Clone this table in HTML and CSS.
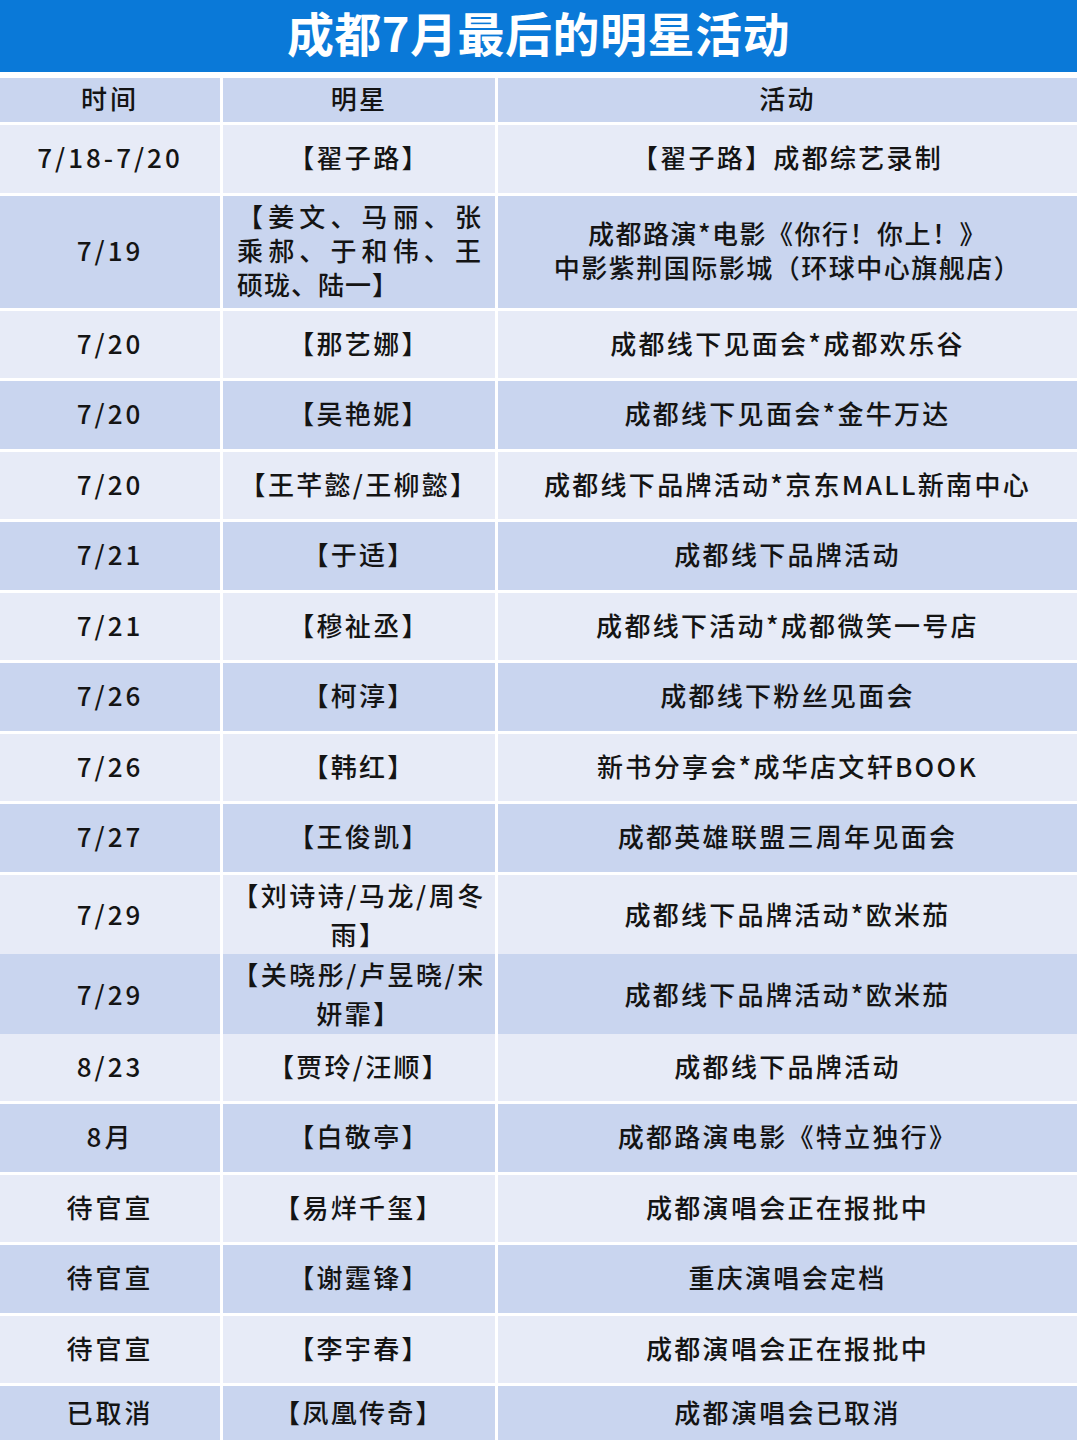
FILE: index.html
```html
<!DOCTYPE html>
<html lang="zh-CN">
<head>
<meta charset="utf-8">
<title>成都7月最后的明星活动</title>
<link rel="stylesheet" href="styles.css">
</head>
<body>
<div class="page">
  <div class="title">成都7月最后的明星活动</div>
  <div class="table">
    <div class="row head dark"><div class="cell">时间</div><div class="cell">明星</div><div class="cell">活动</div></div>
    <div class="row light"><div class="cell">7/18-7/20</div><div class="cell">【翟子路】</div><div class="cell">【翟子路】成都综艺录制</div></div>
    <div class="row dark tall">
      <div class="cell">7/19</div>
      <div class="cell"><div class="just"><span class="jl">【姜文、马丽、张</span><span class="jl">乘郝、于和伟、王</span><span class="jl last">硕珑、陆一】</span></div></div>
      <div class="cell"><div class="two"><span class="ln">成都路演*电影《你行！你上！》</span><span class="ln">中影紫荆国际影城（环球中心旗舰店）</span></div></div>
    </div>
    <div class="row light"><div class="cell">7/20</div><div class="cell">【那艺娜】</div><div class="cell">成都线下见面会*成都欢乐谷</div></div>
    <div class="row dark"><div class="cell">7/20</div><div class="cell">【吴艳妮】</div><div class="cell">成都线下见面会*金牛万达</div></div>
    <div class="row light"><div class="cell">7/20</div><div class="cell">【王芊懿/王柳懿】</div><div class="cell">成都线下品牌活动*京东MALL新南中心</div></div>
    <div class="row dark"><div class="cell">7/21</div><div class="cell">【于适】</div><div class="cell">成都线下品牌活动</div></div>
    <div class="row light"><div class="cell">7/21</div><div class="cell">【穆祉丞】</div><div class="cell">成都线下活动*成都微笑一号店</div></div>
    <div class="row dark"><div class="cell">7/26</div><div class="cell">【柯淳】</div><div class="cell">成都线下粉丝见面会</div></div>
    <div class="row light"><div class="cell">7/26</div><div class="cell">【韩红】</div><div class="cell">新书分享会*成华店文轩BOOK</div></div>
    <div class="row dark"><div class="cell">7/27</div><div class="cell">【王俊凯】</div><div class="cell">成都英雄联盟三周年见面会</div></div>
    <div class="row light mid"><div class="cell">7/29</div><div class="cell"><div class="wrap2"><span class="ln">【刘诗诗/马龙/周冬</span><span class="ln">雨】</span></div></div><div class="cell">成都线下品牌活动*欧米茄</div></div>
    <div class="row dark mid"><div class="cell">7/29</div><div class="cell"><div class="wrap2"><span class="ln">【关晓彤/卢昱晓/宋</span><span class="ln">妍霏】</span></div></div><div class="cell">成都线下品牌活动*欧米茄</div></div>
    <div class="row light"><div class="cell">8/23</div><div class="cell">【贾玲/汪顺】</div><div class="cell">成都线下品牌活动</div></div>
    <div class="row dark"><div class="cell">8月</div><div class="cell">【白敬亭】</div><div class="cell">成都路演电影《特立独行》</div></div>
    <div class="row light"><div class="cell">待官宣</div><div class="cell">【易烊千玺】</div><div class="cell">成都演唱会正在报批中</div></div>
    <div class="row dark"><div class="cell">待官宣</div><div class="cell">【谢霆锋】</div><div class="cell">重庆演唱会定档</div></div>
    <div class="row light"><div class="cell">待官宣</div><div class="cell">【李宇春】</div><div class="cell">成都演唱会正在报批中</div></div>
    <div class="row dark end"><div class="cell">已取消</div><div class="cell">【凤凰传奇】</div><div class="cell">成都演唱会已取消</div></div>
  </div>
</div>
</body>
</html>
```

FILE: styles.css
```css
html, body {
  margin: 0;
  padding: 0;
  background: #ffffff;
}
body {
  font-family: "Noto Sans CJK SC", "Noto Sans", "Liberation Sans", sans-serif;
  color: #141414;
}
.page {
  width: 1077px;
  display: flex;
  flex-direction: column;
}
.title {
  height: 72px;
  box-sizing: border-box;
  padding-bottom: 10px;
  background: #0a79d8;
  color: #ffffff;
  font-size: 47px;
  line-height: 1;
  font-weight: 700;
  display: flex;
  align-items: center;
  justify-content: center;
  margin-bottom: 6px;
  letter-spacing: 0.5px;
}
.table {
  display: flex;
  flex-direction: column;
  gap: 3px;
}
.row {
  display: grid;
  grid-template-columns: 220px 272px 1fr;
  column-gap: 3px;
  height: 67.5px;
}
.row.head { height: 44px; }
.row.tall { height: 112px; }
.row.mid { height: 76.5px; }
.row.end { height: 57px; }
.cell {
  box-sizing: border-box;
  padding-bottom: 4px;
  display: flex;
  align-items: center;
  justify-content: center;
  text-align: center;
  font-size: 26px;
  font-weight: 500;
  letter-spacing: 2.3px;
  white-space: nowrap;
}
.row.head .cell { padding-bottom: 6px; }
.row.end .cell { padding-bottom: 6px; }
.row .cell:first-child {
  letter-spacing: 3px;
}
.light .cell { background: #e7ebf7; }
.dark .cell { background: #c9d5ef; }
.just {
  width: 244px;
  line-height: 34px;
  letter-spacing: 0;
}
.jl {
  display: block;
  text-align: justify;
  text-align-last: justify;
}
.jl.last {
  text-align-last: left;
  letter-spacing: 1px;
}
.ln {
  display: block;
}
.two {
  line-height: 34px;
  letter-spacing: 1.5px;
}
.wrap2 {
  line-height: 39px;
  letter-spacing: 2.5px;
}
```
